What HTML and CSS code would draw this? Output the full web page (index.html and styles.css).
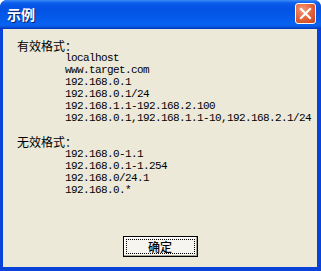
FILE: index.html
```
<!DOCTYPE html>
<html lang="zh">
<head>
    <meta charset="UTF-8">
    <meta name="viewport" content="width=device-width, initial-scale=1.0">
    <title>示例</title>
    <link rel="stylesheet" href="styles.css">
</head>
<body>

<div class="window">
    <div class="titlebar">
        <span class="title">示例</span>
        <button class="close-btn" aria-label="关闭">
            <svg width="13" height="13" viewBox="0 0 13 13">
                <path d="M2 2 L11 11 M11 2 L2 11" stroke="#fff" stroke-width="2.2" stroke-linecap="square"/>
            </svg>
        </button>
    </div>

    <div class="content">
        <div class="heading">有效格式：</div>
        <div class="list">
            <div class="item">localhost</div>
            <div class="item">www.target.com</div>
            <div class="item">192.168.0.1</div>
            <div class="item">192.168.0.1/24</div>
            <div class="item">192.168.1.1-192.168.2.100</div>
            <div class="item">192.168.0.1,192.168.1.1-10,192.168.2.1/24</div>
        </div>
        <div class="blank"></div>
        <div class="heading">无效格式：</div>
        <div class="list">
            <div class="item">192.168.0-1.1</div>
            <div class="item">192.168.0.1-1.254</div>
            <div class="item">192.168.0/24.1</div>
            <div class="item">192.168.0.*</div>
        </div>

        <div class="actions">
            <button class="ok-btn"><span class="focus">确定</span></button>
        </div>
    </div>
</div>

</body>
</html>
```

FILE: styles.css
```
body {
    margin: 0;
    width: 321px;
    height: 271px;
    overflow: hidden;
    font-family: "Noto Sans CJK SC", "DejaVu Sans", sans-serif;
}

.window {
    width: 321px;
    height: 271px;
    box-sizing: border-box;
    display: flex;
    flex-direction: column;
    background: #0842d8;
    border-radius: 7px 7px 0 0;
    padding: 0 4px 4px 3px;
}

.titlebar {
    height: 29px;
    margin: 0 -4px 0 -3px;
    border-radius: 7px 7px 0 0;
    background: linear-gradient(#3d8cf7 0, #0a5ded 3px, #0352e4 8px, #0358e8 16px, #0862f1 24px, #0a5ee9 26px, #0442cc 28px, #0235bd 29px);
    display: flex;
    align-items: center;
    justify-content: space-between;
    padding: 0 5px 0 7px;
}

.title {
    color: #fff;
    font-size: 14px;
    font-weight: bold;
    text-shadow: 1px 1px 0 #0a1e6e;
    margin-top: -1px;
}

.close-btn {
    width: 21px;
    height: 21px;
    padding: 0;
    border: 1px solid #fff;
    border-radius: 3px;
    background: radial-gradient(circle at 35% 30%, #f49a7b 0, #e5683f 45%, #c8401c 100%);
    display: flex;
    align-items: center;
    justify-content: center;
    margin-top: -2px;
}

.content {
    flex: 1;
    background: #ece9d8;
    padding: 11px 0 0 14px;
    display: flex;
    flex-direction: column;
}

.heading {
    font-size: 12px;
    line-height: 12px;
    height: 12px;
    color: #000;
}

.list {
    margin-left: 48px;
    display: flex;
    flex-direction: column;
}

.item {
    font-family: "Liberation Mono", "DejaVu Sans Mono", monospace;
    font-size: 11px;
    letter-spacing: -0.6px;
    line-height: 12px;
    height: 12px;
    color: #000;
    white-space: nowrap;
}

.blank {
    height: 12px;
}

.actions {
    display: flex;
    justify-content: center;
    margin-top: 40px;
    padding-right: 14px;
}

.ok-btn {
    width: 75px;
    height: 21px;
    padding: 2px;
    border: 1px solid #000;
    background: #f6f5f0;
    box-shadow: inset -1px -1px 0 #a8a697, inset 1px 1px 0 #fff;
    font-family: "Noto Sans CJK SC", sans-serif;
    font-size: 12px;
    font-weight: 500;
    color: #000;
}

.focus {
    display: flex;
    align-items: center;
    justify-content: center;
    height: 100%;
    border: 1px dotted #000;
    box-sizing: border-box;
    line-height: 12px;
}
```
